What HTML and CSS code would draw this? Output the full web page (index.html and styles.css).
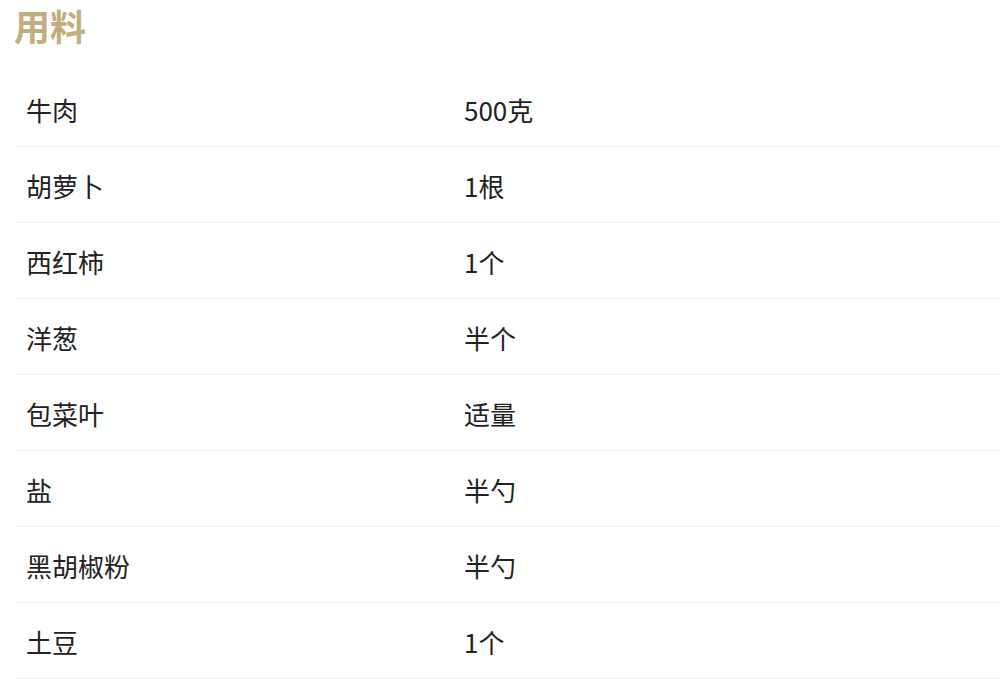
FILE: index.html
```html
<!DOCTYPE html>
<html lang="zh">
<head>
<meta charset="utf-8">
<link rel="stylesheet" href="styles.css">
</head>
<body>
<div class="page">
  <h2 class="title">用料</h2>
  <div class="table">
    <div class="row"><div class="name">牛肉</div><div class="amount">500克</div></div>
    <div class="row"><div class="name">胡萝卜</div><div class="amount">1根</div></div>
    <div class="row"><div class="name">西红柿</div><div class="amount">1个</div></div>
    <div class="row"><div class="name">洋葱</div><div class="amount">半个</div></div>
    <div class="row"><div class="name">包菜叶</div><div class="amount">适量</div></div>
    <div class="row"><div class="name">盐</div><div class="amount">半勺</div></div>
    <div class="row"><div class="name">黑胡椒粉</div><div class="amount">半勺</div></div>
    <div class="row"><div class="name">土豆</div><div class="amount">1个</div></div>
  </div>
</div>
</body>
</html>
```
FILE: styles.css
```css
html, body {
  margin: 0;
  padding: 0;
  background: #fff;
}
body {
  font-family: "Noto Sans CJK SC", "Noto Sans", sans-serif;
  color: #222;
  overflow: hidden;
}
.page {
  padding: 0 0 0 14px;
}
.title {
  margin: 0;
  padding-top: 3px;
  height: 68px;
  font-size: 36px;
  line-height: 44px;
  font-weight: 700;
  color: #c2ad7c;
}
.table {
  width: 1000px;
}
.row {
  display: grid;
  grid-template-columns: 438px 1fr;
  height: 75px;
  border-bottom: 1px solid #f0f0f0;
  align-items: center;
  font-size: 26px;
}
.name, .amount {
  padding-left: 12px;
  padding-top: 2px;
}
```
